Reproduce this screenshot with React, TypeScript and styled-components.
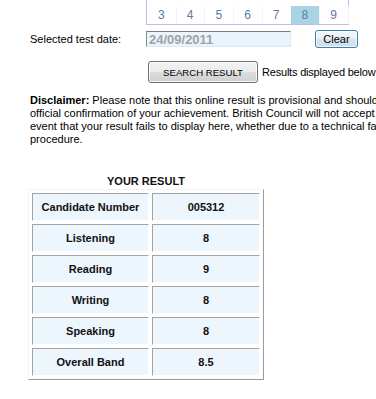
import React from 'react';
import styled, { createGlobalStyle } from 'styled-components';

const GlobalStyle = createGlobalStyle`
  html, body {
    margin: 0;
    padding: 0;
    overflow: hidden;
    background: #fff;
  }
  body {
    font-family: "Liberation Sans", Arial, sans-serif;
    font-size: 11px;
    color: #000;
  }
`;

const days = [3, 4, 5, 6, 7, 8, 9];
const selectedDay = 8;

const results = [
  { label: 'Candidate Number', value: '005312' },
  { label: 'Listening', value: '8' },
  { label: 'Reading', value: '9' },
  { label: 'Writing', value: '8' },
  { label: 'Speaking', value: '8' },
  { label: 'Overall Band', value: '8.5' },
];

export default function App() {
  return (
    <PageS>
      <GlobalStyle />
      <CalendarS>
        {days.map((d) => (
          <DayS key={d} $selected={d === selectedDay}>
            {d}
          </DayS>
        ))}
      </CalendarS>

      <DateRowS>
        <LabelS>Selected test date:</LabelS>
        <DateInputS value="24/09/2011" disabled readOnly />
        <ClearBtnS>Clear</ClearBtnS>
      </DateRowS>

      <SearchRowS>
        <SearchBtnS>SEARCH RESULT</SearchBtnS>
        <HintS>Results displayed below</HintS>
      </SearchRowS>

      <DisclaimerS>
        <LineS>
          <b>Disclaimer:</b> Please note that this online result is provisional and should not be used as an
        </LineS>
        <LineS>
          official confirmation of your achievement. British Council will not accept any liability in the
        </LineS>
        <LineS>
          event that your result fails to display here, whether due to a technical fault or any other
        </LineS>
        <LineS>procedure.</LineS>
      </DisclaimerS>

      <ResultTableS>
        <caption>YOUR RESULT</caption>
        <tbody>
          {results.map((r) => (
            <tr key={r.label}>
              <LabelCellS>{r.label}</LabelCellS>
              <ValueCellS>{r.value}</ValueCellS>
            </tr>
          ))}
        </tbody>
      </ResultTableS>
    </PageS>
  );
}

const PageS = styled.div`
  width: 376px;
  height: 399px;
`;

const CalendarS = styled.div`
  display: grid;
  grid-template-columns: repeat(7, 1fr);
  width: 201px;
  margin-left: 146px;
  padding-top: 6px;
  border: 1px solid #c4bce2;
  border-top: 0;
`;

const DayS = styled.div<{ $selected?: boolean }>`
  height: 18px;
  line-height: 18px;
  text-align: center;
  font-size: 12px;
  color: #5b7d9e;
  background: ${(p) => (p.$selected ? '#a9d4e6' : 'transparent')};
  border-right: 1px solid #f3f1f9;
  margin-right: -1px;
`;

const DateRowS = styled.div`
  display: grid;
  grid-template-columns: 146px 145px auto;
  align-items: center;
  height: 18px;
  margin-top: 5px;
`;

const LabelS = styled.span`
  padding-left: 30px;
  white-space: nowrap;
`;

const DateInputS = styled.input`
  box-sizing: border-box;
  width: 145px;
  height: 16px;
  margin: 0;
  padding: 0 2px;
  border: 1px solid #e4e8ec;
  border-top-color: #7a7a7a;
  border-left-color: #8a8a8a;
  background: #eaf4fc;
  font-family: inherit;
  font-size: 13px;
  font-weight: bold;
  color: #a3a3a3;
  -webkit-text-fill-color: #a3a3a3;
  opacity: 1;
`;

const ClearBtnS = styled.button`
  box-sizing: border-box;
  width: 43px;
  height: 18px;
  margin-left: 24px;
  padding: 0;
  border: 1px solid #3c7fb1;
  border-radius: 3px;
  background: linear-gradient(#f4f8fb 0%, #e6eef4 50%, #d8e3ec 51%, #cfdce7 100%);
  box-shadow: inset 0 0 0 1px rgba(255, 255, 255, 0.7);
  font-family: inherit;
  font-size: 11px;
  color: #000;
`;

const SearchRowS = styled.div`
  display: flex;
  align-items: center;
  height: 22px;
  margin-top: 13px;
  padding-left: 148px;
`;

const SearchBtnS = styled.button`
  box-sizing: border-box;
  flex-shrink: 0;
  width: 110px;
  height: 22px;
  margin: 0;
  padding: 0;
  border: 1px solid #707070;
  border-radius: 3px;
  background: linear-gradient(#f2f2f2 0%, #ebebeb 50%, #dddddd 51%, #cfcfcf 100%);
  box-shadow: inset 0 0 0 1px rgba(255, 255, 255, 0.8);
  font-family: inherit;
  font-size: 9.6px;
  color: #000;
`;

const HintS = styled.span`
  margin-left: 4px;
  white-space: nowrap;
  letter-spacing: -0.2px;
`;

const DisclaimerS = styled.div`
  margin-top: 11px;
  padding-left: 30px;
  line-height: 13px;
  white-space: nowrap;

  b {
    font-weight: bold;
  }
`;

const LineS = styled.div``;

const ResultTableS = styled.table`
  margin-top: 29px;
  margin-left: 28px;
  border-collapse: separate;
  border-spacing: 3px;
  border: 1px solid;
  border-color: #f4f4f4 #9a9a9a #9a9a9a #f4f4f4;
  font-weight: bold;
  color: #111;

  caption {
    font-weight: bold;
    line-height: 13px;
    padding-bottom: 1px;
  }
`;

const CellS = styled.td`
  height: 26px;
  padding: 0;
  text-align: center;
  vertical-align: middle;
  background: #edf5fd;
  border: 1px solid;
  border-color: #a4a4a4 #ffffff #ffffff #a4a4a4;
`;

const LabelCellS = styled(CellS)`
  width: 115px;
`;

const ValueCellS = styled(CellS)`
  width: 106px;
`;
